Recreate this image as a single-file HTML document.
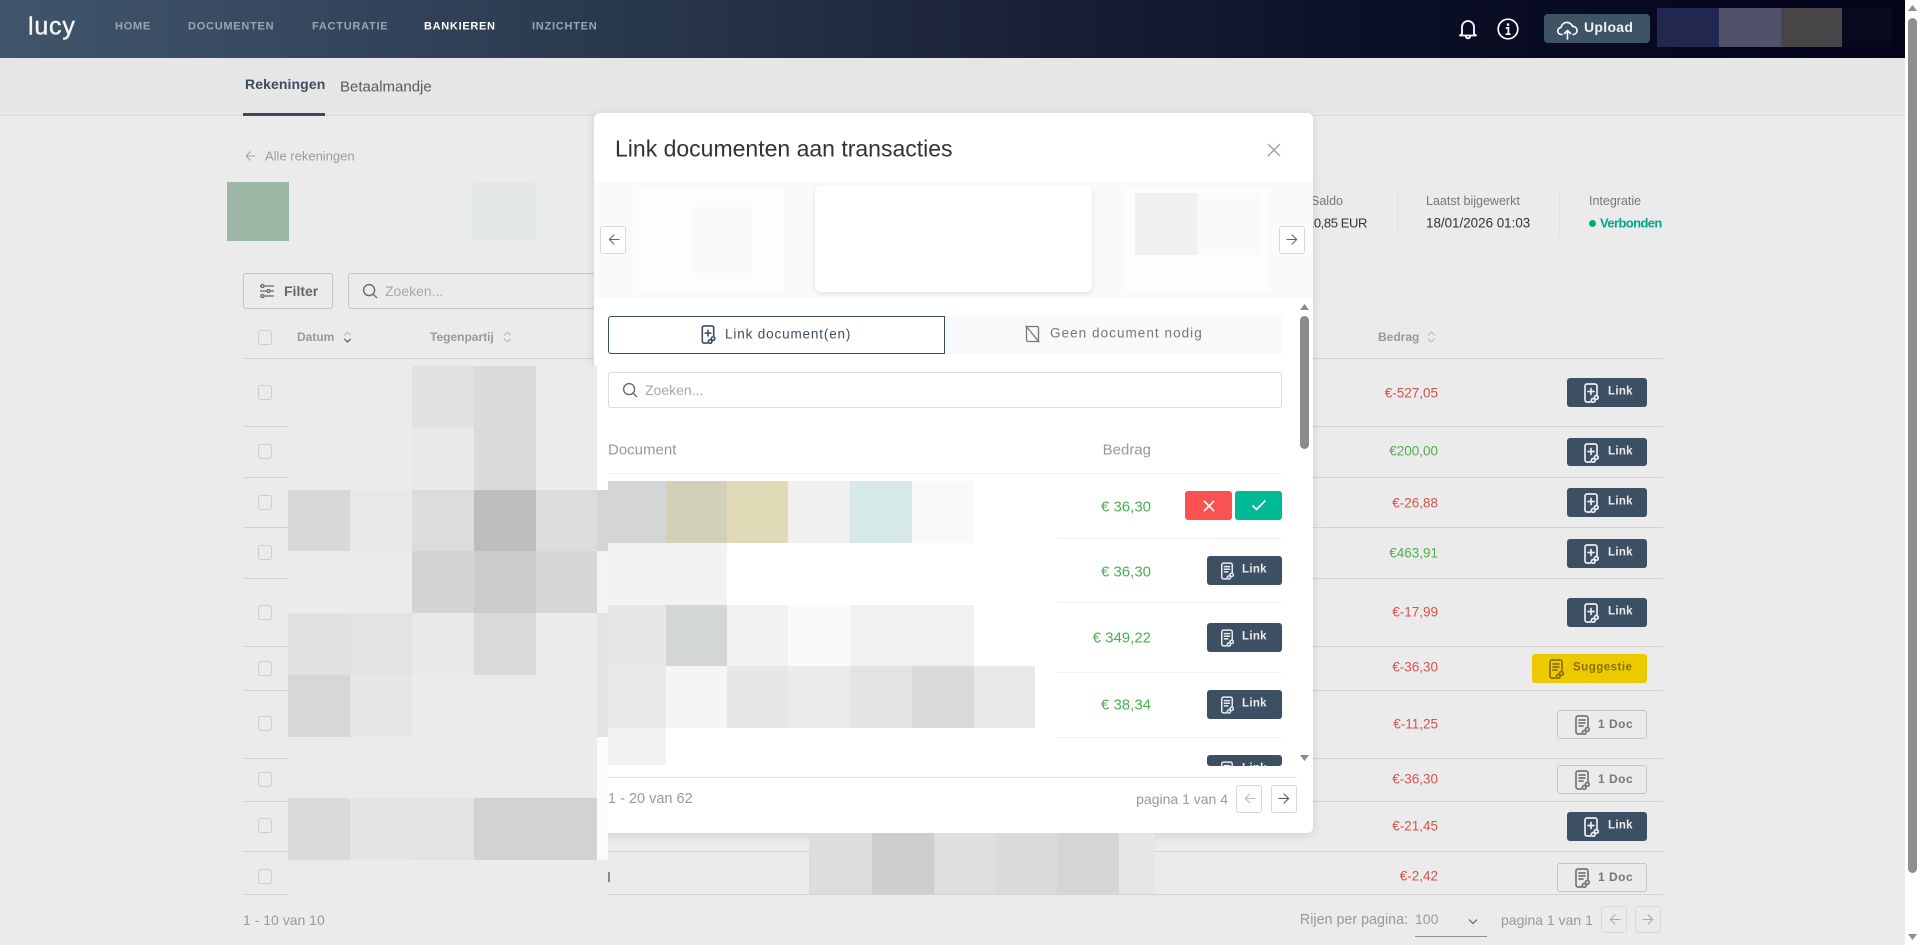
<!DOCTYPE html>
<html lang="nl">
<head>
<meta charset="utf-8">
<title>Lucy - Bankieren</title>
<style>
html,body{margin:0;padding:0;width:1920px;height:945px;overflow:hidden;background:#fff;font-family:"Liberation Sans",sans-serif}
#p{position:absolute;left:0;top:0;width:1920px;height:945px;overflow:hidden;background:#fff}
.a{position:absolute}
.t{position:absolute;white-space:nowrap;line-height:1;transform:translateY(-50%)}
.nav{font-size:11px;font-weight:700;letter-spacing:.75px;color:#9aa5b3;top:27px}
.th{font-size:12px;font-weight:700;color:#999;top:337px}
.r{font-size:13.5px;color:#d6524a}
.g{font-size:13.5px;color:#4caf50}
.m{font-size:15px;color:#4caf50;right:769px}
.line{position:absolute;height:1px;background:#d3d3d3;left:243px;width:1420px}
.cb{position:absolute;left:258px;width:12px;height:13px;border:1.5px solid #cdcdcd;border-radius:3px;margin-top:-8px}
.btn{position:absolute;background:#3d4f63;border-radius:3px;left:1567px;width:80px;height:29px}
.btn span,.mb span{position:absolute;left:41px;top:14px;transform:translateY(-50%);font-size:11.5px;font-weight:700;line-height:1;color:#e9edf0;letter-spacing:.3px}
.btn svg{position:absolute;left:16px;top:5px}
.doc{position:absolute;left:1557px;width:88px;height:27px;border:1px solid #c4c4c4;border-radius:3px}
.doc span{position:absolute;left:40px;top:13px;transform:translateY(-50%);font-size:12px;font-weight:700;line-height:1;color:#777;letter-spacing:.5px}
.doc svg{position:absolute;left:16px;top:4px}
.mb{position:absolute;left:1207px;width:75px;height:29px;background:#3d4f63;border-radius:3px;overflow:hidden}
.mb span{left:35px}
.mb svg{position:absolute;left:13px;top:6px}
.pg{position:absolute;width:26px;height:27px;border:1px solid #d8d8d8;border-radius:3px;box-sizing:border-box}
.pg svg{position:absolute;left:6px;top:6px}
.c{position:absolute}
</style>
</head>
<body>
<svg width="0" height="0" style="position:absolute">
<defs>
<symbol id="ip" viewBox="0 0 16 20"><g fill="none" stroke="currentColor" stroke-width="1.7" stroke-linecap="round" stroke-linejoin="round"><path d="M7.5 19H4a2 2 0 0 1-2-2V3a2 2 0 0 1 2-2h8a2 2 0 0 1 2 2v8.5"/><path d="M8 5.5v6M5 8.5h6"/><circle cx="13.3" cy="14.4" r="1.9"/><circle cx="10.2" cy="17.4" r="1.9"/></g></symbol>
<symbol id="id" viewBox="0 0 16 20"><g fill="none" stroke="currentColor" stroke-width="1.7" stroke-linecap="round" stroke-linejoin="round"><path d="M7.5 19H4a2 2 0 0 1-2-2V3a2 2 0 0 1 2-2h8a2 2 0 0 1 2 2v8.5"/><path d="M5 5h6M5 8h6M5 11h4"/><circle cx="13.3" cy="14.4" r="1.9"/><circle cx="10.2" cy="17.4" r="1.9"/></g></symbol>
<symbol id="sort" viewBox="0 0 9 14"><path d="M1.5 5L4.5 2l3 3M1.5 9l3 3 3-3" fill="none" stroke="#bdbdbd" stroke-width="1.2" stroke-linecap="round" stroke-linejoin="round"/></symbol>
<symbol id="al" viewBox="0 0 14 14"><path d="M7.5 2L2.5 7l5 5M2.5 7H13" fill="none" stroke="currentColor" stroke-width="1.2" stroke-linecap="round" stroke-linejoin="round"/></symbol>
<symbol id="ar" viewBox="0 0 14 14"><path d="M6.5 2l5 5-5 5M11.5 7H1" fill="none" stroke="currentColor" stroke-width="1.2" stroke-linecap="round" stroke-linejoin="round"/></symbol>
<symbol id="mag" viewBox="0 0 18 18"><g fill="none" stroke="currentColor" stroke-width="1.5" stroke-linecap="round"><circle cx="8" cy="8" r="6.2"/><path d="M12.6 12.6L16.5 16.5"/></g></symbol>
</defs>
</svg>
<div id="p">
<!-- page background -->
<div class="a" style="left:0;top:0;width:1905px;height:945px;background:#ebebeb"></div>
<div class="a" style="left:0;top:58px;width:1905px;height:57px;background:#e6e6e6;border-bottom:1px solid #dcdcdc"></div>
<!-- header -->
<div class="a" style="left:0;top:0;width:1905px;height:58px;background:linear-gradient(90deg,#40556b 0%,#34465c 18%,#273449 36%,#161d33 58%,#0b1027 72%,#03031a 100%)"></div>
<div class="t" style="left:28px;top:27px;font-size:25px;color:#f4f6f8;letter-spacing:.8px;-webkit-text-stroke:.4px #f4f6f8">lucy</div>
<div class="t nav" style="left:115px">HOME</div>
<div class="t nav" style="left:188px">DOCUMENTEN</div>
<div class="t nav" style="left:312px">FACTURATIE</div>
<div class="t nav" style="left:424px;color:#fff;letter-spacing:.7px">BANKIEREN</div>
<div class="t nav" style="left:532px">INZICHTEN</div>
<svg class="a" style="left:1457px;top:18px" width="22" height="22" viewBox="0 0 22 22"><path d="M5 16V9a6 6 0 0 1 12 0v7l2 1.5H3zM9 19a2.2 2.2 0 0 0 4 0" fill="none" stroke="#fff" stroke-width="1.8" stroke-linejoin="round" stroke-linecap="round"/></svg>
<svg class="a" style="left:1497px;top:18px" width="22" height="22" viewBox="0 0 22 22"><circle cx="11" cy="11" r="9.8" fill="none" stroke="#fff" stroke-width="1.7"/><circle cx="11" cy="6.6" r="1.3" fill="#fff"/><path d="M8.8 10h2.6v6M8.6 16.2h5" fill="none" stroke="#fff" stroke-width="1.7"/></svg>
<div class="a" style="left:1544px;top:14px;width:106px;height:29px;background:#3f5366;border-radius:4px"></div>
<svg class="a" style="left:1557px;top:20px" width="21" height="20" viewBox="0 0 21 20"><path d="M5 14.5H4.5a3.5 3.5 0 0 1-.5-7 6 6 0 0 1 11.6-1 4 4 0 0 1 .9 8H16M10.5 19v-8M7.5 13.5l3-3 3 3" fill="none" stroke="#fff" stroke-width="1.6" stroke-linecap="round" stroke-linejoin="round"/></svg>
<div class="t" style="left:1584px;top:27px;font-size:14px;font-weight:700;color:#eef1f4;letter-spacing:.3px">Upload</div>
<div class="c" style="left:1657px;top:8px;width:62px;height:39px;background:#222750"></div>
<div class="c" style="left:1719px;top:8px;width:62px;height:39px;background:#4f5269"></div>
<div class="c" style="left:1781px;top:8px;width:61px;height:39px;background:#484549"></div>
<div class="c" style="left:1842px;top:8px;width:50px;height:39px;background:#08081e"></div>
<!-- tabs -->
<div class="t" style="left:245px;top:84px;font-size:14px;font-weight:700;color:#3f4c5e;letter-spacing:.1px">Rekeningen</div>
<div class="t" style="left:340px;top:87px;font-size:15px;color:#5a5a5a">Betaalmandje</div>
<div class="a" style="left:243px;top:113px;width:82px;height:3px;background:#3d4a5c"></div>
<svg class="a" style="left:244px;top:150px;color:#a3a3a3" width="12" height="12"><use href="#al"/></svg>
<div class="t" style="left:265px;top:156px;font-size:13px;color:#9c9c9c">Alle rekeningen</div>
<div class="c" style="left:227px;top:182px;width:62px;height:59px;background:#9db7a6"></div>
<div class="c" style="left:412px;top:182px;width:61px;height:59px;background:#e9eaea"></div>
<div class="c" style="left:473px;top:182px;width:62px;height:59px;background:#e4e7e8"></div>
<div class="c" style="left:535px;top:182px;width:25px;height:59px;background:#e9eaea"></div>
<!-- stats -->
<div class="t" style="left:1311px;top:201px;font-size:12.5px;color:#777">Saldo</div>
<div class="t" style="right:553px;top:223px;font-size:13px;color:#333;letter-spacing:-.4px">10,85 EUR</div>
<div class="a" style="left:1397px;top:190px;width:1px;height:47px;background:#e2e2e2"></div>
<div class="a" style="left:1559px;top:190px;width:1px;height:47px;background:#e2e2e2"></div>
<div class="t" style="left:1426px;top:201px;font-size:12.5px;color:#777">Laatst bijgewerkt</div>
<div class="t" style="left:1426px;top:223px;font-size:13.4px;color:#333">18/01/2026 01:03</div>
<div class="t" style="left:1589px;top:201px;font-size:12.5px;color:#777">Integratie</div>
<div class="a" style="left:1589px;top:220px;width:7px;height:7px;border-radius:50%;background:#00a888"></div>
<div class="t" style="left:1600px;top:223px;font-size:13px;font-weight:700;color:#00a888;letter-spacing:-.6px">Verbonden</div>
<!-- filter & search -->
<div class="a" style="left:243px;top:273px;width:88px;height:34px;border:1px solid #c6c6c6;border-radius:3px"></div>
<svg class="a" style="left:259px;top:283px" width="16" height="16" viewBox="0 0 16 16"><g fill="none" stroke="#666" stroke-width="1.3"><path d="M5 3h10M1 3h1M11 8h4M1 8h7M5 13h10M1 13h1"/><circle cx="3.5" cy="3" r="1.5"/><circle cx="9.5" cy="8" r="1.5"/><circle cx="3.5" cy="13" r="1.5"/></g></svg>
<div class="t" style="left:284px;top:291px;font-size:14px;font-weight:700;color:#666">Filter</div>
<div class="a" style="left:348px;top:273px;width:300px;height:34px;border:1px solid #c6c6c6;border-radius:3px"></div>
<svg class="a" style="left:362px;top:283px;color:#666" width="16" height="16"><use href="#mag"/></svg>
<div class="t" style="left:385px;top:291px;font-size:14px;color:#a8a8a8">Zoeken...</div>
<!-- table head -->
<div class="cb" style="top:338px"></div>
<div class="t th" style="left:297px">Datum</div>
<svg class="a" style="left:343px;top:330px" width="9" height="14"><use href="#sort"/></svg>
<svg class="a" style="left:343px;top:330px" width="9" height="14" viewBox="0 0 9 14"><path d="M1.5 9l3 3 3-3" fill="none" stroke="#666" stroke-width="1.3"/></svg>
<div class="t th" style="left:430px">Tegenpartij</div>
<svg class="a" style="left:503px;top:330px" width="9" height="14"><use href="#sort"/></svg>
<div class="t th" style="left:1378px">Bedrag</div>
<svg class="a" style="left:1427px;top:330px" width="9" height="14"><use href="#sort"/></svg>
<!-- lines -->
<div class="line" style="top:358px"></div>
<div class="line" style="top:426px"></div>
<div class="line" style="top:477px"></div>
<div class="line" style="top:527px"></div>
<div class="line" style="top:578px"></div>
<div class="line" style="top:646px"></div>
<div class="line" style="top:690px"></div>
<div class="line" style="top:758px"></div>
<div class="line" style="top:801px"></div>
<div class="line" style="top:851px"></div>
<div class="line" style="top:894px"></div>
<!-- checkboxes -->
<div class="cb" style="top:393px"></div>
<div class="cb" style="top:452px"></div>
<div class="cb" style="top:503px"></div>
<div class="cb" style="top:553px"></div>
<div class="cb" style="top:613px"></div>
<div class="cb" style="top:669px"></div>
<div class="cb" style="top:724px"></div>
<div class="cb" style="top:780px"></div>
<div class="cb" style="top:826px"></div>
<div class="cb" style="top:877px"></div>
<!-- amounts -->
<div class="t r" style="right:482px;top:393px">€-527,05</div>
<div class="t g" style="right:482px;top:451px">€200,00</div>
<div class="t r" style="right:482px;top:503px">€-26,88</div>
<div class="t g" style="right:482px;top:553px">€463,91</div>
<div class="t r" style="right:482px;top:612px">€-17,99</div>
<div class="t r" style="right:482px;top:667px">€-36,30</div>
<div class="t r" style="right:482px;top:724px">€-11,25</div>
<div class="t r" style="right:482px;top:779px">€-36,30</div>
<div class="t r" style="right:482px;top:826px">€-21,45</div>
<div class="t r" style="right:482px;top:876px">€-2,42</div>
<!-- row actions -->
<div class="btn" style="top:378px;color:#e9edf0"><svg width="16" height="20"><use href="#ip"/></svg><span>Link</span></div>
<div class="btn" style="top:438px;height:28px;color:#e9edf0"><svg width="16" height="20"><use href="#ip"/></svg><span>Link</span></div>
<div class="btn" style="top:488px;color:#e9edf0"><svg width="16" height="20"><use href="#ip"/></svg><span>Link</span></div>
<div class="btn" style="top:539px;color:#e9edf0"><svg width="16" height="20"><use href="#ip"/></svg><span>Link</span></div>
<div class="btn" style="top:598px;color:#e9edf0"><svg width="16" height="20"><use href="#ip"/></svg><span>Link</span></div>
<div class="btn" style="top:654px;left:1532px;width:115px;background:#edc900;color:#8a7000"><svg width="16" height="20"><use href="#id"/></svg><span style="color:#8a7000;left:41px;font-size:11.5px;letter-spacing:.5px">Suggestie</span></div>
<div class="doc" style="top:710px;color:#777"><svg width="16" height="20"><use href="#id"/></svg><span>1 Doc</span></div>
<div class="doc" style="top:765px;color:#777"><svg width="16" height="20"><use href="#id"/></svg><span>1 Doc</span></div>
<div class="btn" style="top:812px;color:#e9edf0"><svg width="16" height="20"><use href="#ip"/></svg><span>Link</span></div>
<div class="doc" style="top:863px;color:#777"><svg width="16" height="20"><use href="#id"/></svg><span>1 Doc</span></div>
<!-- bottom pagination -->
<div class="t" style="left:243px;top:920px;font-size:14px;color:#999">1 - 10 van 10</div>
<div class="t" style="right:512px;top:920px;font-size:14.3px;color:#999">Rijen per pagina:</div>
<div class="t" style="left:1415px;top:919px;font-size:14px;color:#999">100</div>
<svg class="a" style="left:1468px;top:918px" width="10" height="7" viewBox="0 0 10 7"><path d="M1 1.5l4 4 4-4" fill="none" stroke="#777" stroke-width="1.4"/></svg>
<div class="a" style="left:1415px;top:936px;width:72px;height:1px;background:#8f8f8f"></div>
<div class="t" style="left:1501px;top:920px;font-size:14px;color:#999">pagina 1 van 1</div>
<div class="pg" style="left:1601px;top:906px;color:#aaa"><svg width="13" height="13"><use href="#al"/></svg></div>
<div class="pg" style="left:1635px;top:906px;color:#aaa"><svg width="13" height="13"><use href="#ar"/></svg></div>
<!-- scrollbar -->
<svg class="a" style="left:1908px;top:4px" width="9" height="8"><path d="M4.5 1L9 7H0z" fill="#8e8e8e"/></svg>
<div class="a" style="left:1908px;top:18px;width:9px;height:855px;background:#8e8e8e;border-radius:5px"></div>
<svg class="a" style="left:1908px;top:933px" width="9" height="8"><path d="M4.5 7L9 1H0z" fill="#8e8e8e"/></svg>
<!-- modal -->
<div class="a" style="left:594px;top:113px;width:719px;height:720px;background:#fff;border-radius:6px;box-shadow:0 2px 10px rgba(0,0,0,.12)"></div>
<div class="t" style="left:615px;top:149px;font-size:23px;color:#333">Link documenten aan transacties</div>
<svg class="a" style="left:1267px;top:143px" width="14" height="14" viewBox="0 0 14 14"><path d="M1 1l12 12M13 1L1 13" stroke="#a0a0a0" stroke-width="1.4" fill="none"/></svg>
<!-- carousel -->
<div class="a" style="left:594px;top:182px;width:719px;height:116px;background:#fafafa"></div>
<div class="c" style="left:639px;top:188px;width:145px;height:104px;background:#fdfdfd"></div>
<div class="c" style="left:691px;top:207px;width:62px;height:66px;background:#f9f9f9"></div>
<div class="a" style="left:815px;top:186px;width:277px;height:106px;background:#fff;border-radius:6px;box-shadow:0 2px 6px rgba(0,0,0,.1)"></div>
<div class="c" style="left:1125px;top:188px;width:145px;height:104px;background:#fdfdfd"></div>
<div class="c" style="left:1135px;top:193px;width:62px;height:62px;background:#f0f0f0"></div>
<div class="c" style="left:1197px;top:193px;width:63px;height:62px;background:#fafafa"></div>
<div class="pg" style="left:600px;top:226px;height:28px;background:#fff;color:#666"><svg width="13" height="13"><use href="#al"/></svg></div>
<div class="pg" style="left:1279px;top:226px;height:28px;background:#fff;color:#666"><svg width="13" height="13"><use href="#ar"/></svg></div>
<!-- modal tabs -->
<div class="a" style="left:945px;top:316px;width:337px;height:38px;background:#f9f9f9"></div>
<div class="a" style="left:608px;top:316px;width:335px;height:36px;border:1px solid #3d4f63;border-radius:3px 0 0 3px"></div>
<svg class="a" style="left:700px;top:325px;color:#3d4f63" width="16" height="19"><use href="#ip"/></svg>
<div class="t" style="left:725px;top:334px;font-size:13.5px;color:#3d4f63;letter-spacing:.85px">Link document(en)</div>
<svg class="a" style="left:1025px;top:325px" width="15" height="18" viewBox="0 0 15 18"><g fill="none" stroke="#777" stroke-width="1.3" stroke-linecap="round"><path d="M3 1.5h9a1.5 1.5 0 0 1 1.5 1.5v12a1.5 1.5 0 0 1-1.5 1.5H3A1.5 1.5 0 0 1 1.5 15V3A1.5 1.5 0 0 1 3 1.5z"/><path d="M1 1l13 16"/></g></svg>
<div class="t" style="left:1050px;top:333px;font-size:13.5px;color:#777;letter-spacing:1.05px">Geen document nodig</div>
<!-- modal scrollbar -->
<svg class="a" style="left:1300px;top:303px" width="9" height="8"><path d="M4.5 1L9 7H0z" fill="#8b8b8b"/></svg>
<div class="a" style="left:1300px;top:316px;width:9px;height:133px;background:#8b8b8b;border-radius:5px"></div>
<svg class="a" style="left:1300px;top:754px" width="9" height="8"><path d="M4.5 7L9 1H0z" fill="#8b8b8b"/></svg>
<!-- modal search -->
<div class="a" style="left:608px;top:372px;width:672px;height:34px;border:1px solid #dcdcdc;border-radius:3px"></div>
<svg class="a" style="left:622px;top:382px;color:#666" width="16" height="16"><use href="#mag"/></svg>
<div class="t" style="left:645px;top:390px;font-size:14px;color:#a8a8a8">Zoeken...</div>
<!-- modal table -->
<div class="t" style="left:608px;top:450px;font-size:15px;color:#999">Document</div>
<div class="t" style="right:769px;top:450px;font-size:15px;color:#999">Bedrag</div>
<div class="a" style="left:608px;top:473px;width:674px;height:1px;background:#f0f0f0"></div>
<div class="a" style="left:1058px;top:538px;width:224px;height:1px;background:#f0f0f0"></div>
<div class="a" style="left:1058px;top:602px;width:224px;height:1px;background:#f0f0f0"></div>
<div class="a" style="left:1058px;top:672px;width:224px;height:1px;background:#f0f0f0"></div>
<div class="a" style="left:1058px;top:737px;width:224px;height:1px;background:#f0f0f0"></div>
<div class="t m" style="top:507px">€ 36,30</div>
<div class="t m" style="top:572px">€ 36,30</div>
<div class="t m" style="top:638px">€ 349,22</div>
<div class="t m" style="top:705px">€ 38,34</div>
<div class="a" style="left:1185px;top:491px;width:47px;height:29px;background:#fa5252;border-radius:3px"></div>
<svg class="a" style="left:1203px;top:500px" width="12" height="12" viewBox="0 0 12 12"><path d="M1 1l10 10M11 1L1 11" stroke="#fff" stroke-width="1.6" fill="none"/></svg>
<div class="a" style="left:1235px;top:491px;width:47px;height:29px;background:#00b995;border-radius:3px"></div>
<svg class="a" style="left:1251px;top:499px" width="16" height="12" viewBox="0 0 16 12"><path d="M1.5 6.5l4 4 9-9" stroke="#fff" stroke-width="1.6" fill="none"/></svg>
<div class="mb" style="top:556px;color:#e9edf0"><svg width="14" height="18"><use href="#id"/></svg><span>Link</span></div>
<div class="mb" style="top:623px;color:#e9edf0"><svg width="14" height="18"><use href="#id"/></svg><span>Link</span></div>
<div class="mb" style="top:690px;color:#e9edf0"><svg width="14" height="18"><use href="#id"/></svg><span>Link</span></div>
<div class="mb" style="top:755px;height:11px;color:#e9edf0"><svg width="14" height="18"><use href="#id"/></svg><span>Link</span></div>
<!-- modal redaction -->
<div class="c" style="left:608px;top:481px;width:58px;height:62px;background:#d3d5d6"></div>
<div class="c" style="left:666px;top:481px;width:61px;height:62px;background:#d2d1b7"></div>
<div class="c" style="left:727px;top:481px;width:61px;height:62px;background:#e0dab7"></div>
<div class="c" style="left:788px;top:481px;width:62px;height:62px;background:#f0f0f0"></div>
<div class="c" style="left:850px;top:481px;width:62px;height:62px;background:#d7e9e6"></div>
<div class="c" style="left:912px;top:481px;width:62px;height:62px;background:#f9f9f9"></div>
<div class="c" style="left:608px;top:543px;width:119px;height:62px;background:#f2f2f2"></div>
<div class="c" style="left:608px;top:605px;width:58px;height:61px;background:#e7e7e7"></div>
<div class="c" style="left:666px;top:605px;width:61px;height:61px;background:#d3d6d7"></div>
<div class="c" style="left:727px;top:605px;width:61px;height:61px;background:#f2f2f2"></div>
<div class="c" style="left:788px;top:605px;width:62px;height:61px;background:#fafafa"></div>
<div class="c" style="left:850px;top:605px;width:124px;height:61px;background:#f1f1f1"></div>
<div class="c" style="left:608px;top:666px;width:58px;height:62px;background:#e9e9e9"></div>
<div class="c" style="left:666px;top:666px;width:61px;height:62px;background:#f5f5f5"></div>
<div class="c" style="left:727px;top:666px;width:61px;height:62px;background:#e7e7e7"></div>
<div class="c" style="left:788px;top:666px;width:62px;height:62px;background:#ebebeb"></div>
<div class="c" style="left:850px;top:666px;width:62px;height:62px;background:#e3e3e3"></div>
<div class="c" style="left:912px;top:666px;width:62px;height:62px;background:#d9d9d9"></div>
<div class="c" style="left:974px;top:666px;width:61px;height:62px;background:#e8e8e8"></div>
<div class="c" style="left:608px;top:728px;width:58px;height:37px;background:#f2f2f2"></div>
<!-- modal footer -->
<div class="a" style="left:597px;top:766px;width:716px;height:67px;background:#fff;border-radius:0 0 6px 6px"></div>
<div class="a" style="left:608px;top:777px;width:689px;height:1px;background:#e0e0e0"></div>
<div class="t" style="left:608px;top:799px;font-size:14.5px;color:#999">1 - 20 van 62</div>
<div class="t" style="right:692px;top:799px;font-size:14px;color:#999">pagina 1 van 4</div>
<div class="pg" style="left:1236px;top:785px;height:28px;color:#bbb"><svg width="13" height="13"><use href="#al"/></svg></div>
<div class="pg" style="left:1271px;top:785px;height:28px;color:#555"><svg width="13" height="13"><use href="#ar"/></svg></div>
<!-- redaction over page -->
<div class="c" style="left:288px;top:366px;width:309px;height:534px;background:#ebebeb"></div>
<div class="c" style="left:597px;top:366px;width:11px;height:124px;background:#fff"></div>
<div class="c" style="left:597px;top:551px;width:11px;height:62px;background:#f3f3f3"></div>
<div class="c" style="left:597px;top:737px;width:11px;height:123px;background:#fbfbfb"></div>
<div class="c" style="left:412px;top:366px;width:62px;height:62px;background:#e2e2e2"></div>
<div class="c" style="left:474px;top:366px;width:62px;height:124px;background:#dadada"></div>
<div class="c" style="left:412px;top:428px;width:62px;height:62px;background:#e9e9e9"></div>
<div class="c" style="left:288px;top:490px;width:62px;height:61px;background:#d8d8d8"></div>
<div class="c" style="left:350px;top:490px;width:62px;height:61px;background:#e8e8e8"></div>
<div class="c" style="left:412px;top:490px;width:62px;height:61px;background:#dcdcdc"></div>
<div class="c" style="left:474px;top:490px;width:62px;height:61px;background:#bdbdbd"></div>
<div class="c" style="left:536px;top:490px;width:61px;height:61px;background:#dcdcdc"></div>
<div class="c" style="left:597px;top:490px;width:11px;height:61px;background:#d4d6d6"></div>
<div class="c" style="left:412px;top:551px;width:62px;height:62px;background:#d4d4d4"></div>
<div class="c" style="left:474px;top:551px;width:62px;height:62px;background:#cccccc"></div>
<div class="c" style="left:536px;top:551px;width:61px;height:62px;background:#d6d6d6"></div>
<div class="c" style="left:288px;top:613px;width:62px;height:62px;background:#e1e1e1"></div>
<div class="c" style="left:350px;top:613px;width:62px;height:62px;background:#e3e3e3"></div>
<div class="c" style="left:412px;top:613px;width:62px;height:62px;background:#e9e9e9"></div>
<div class="c" style="left:474px;top:613px;width:62px;height:62px;background:#d9d9d9"></div>
<div class="c" style="left:597px;top:613px;width:11px;height:124px;background:#e4e4e4"></div>
<div class="c" style="left:288px;top:675px;width:62px;height:62px;background:#d7d7d7"></div>
<div class="c" style="left:350px;top:675px;width:62px;height:62px;background:#e6e6e6"></div>
<div class="c" style="left:288px;top:798px;width:62px;height:62px;background:#dadada"></div>
<div class="c" style="left:350px;top:798px;width:62px;height:62px;background:#e4e4e4"></div>
<div class="c" style="left:412px;top:798px;width:62px;height:62px;background:#e3e3e3"></div>
<div class="c" style="left:474px;top:798px;width:123px;height:62px;background:#d2d2d2"></div>
<div class="c" style="left:597px;top:860px;width:11px;height:40px;background:#ebebeb"></div>
<div class="c" style="left:608px;top:872px;width:2px;height:10px;background:#888"></div>
<!-- redaction below modal -->
<div class="c" style="left:809px;top:833px;width:63px;height:61px;background:#dcdcdc"></div>
<div class="c" style="left:872px;top:833px;width:62px;height:61px;background:#cecece"></div>
<div class="c" style="left:934px;top:833px;width:62px;height:61px;background:#dedede"></div>
<div class="c" style="left:996px;top:833px;width:61px;height:61px;background:#dadada"></div>
<div class="c" style="left:1057px;top:833px;width:62px;height:61px;background:#d5d5d5"></div>
<div class="c" style="left:1119px;top:833px;width:36px;height:61px;background:#e6e6e6"></div>
</div>
</body>
</html>
